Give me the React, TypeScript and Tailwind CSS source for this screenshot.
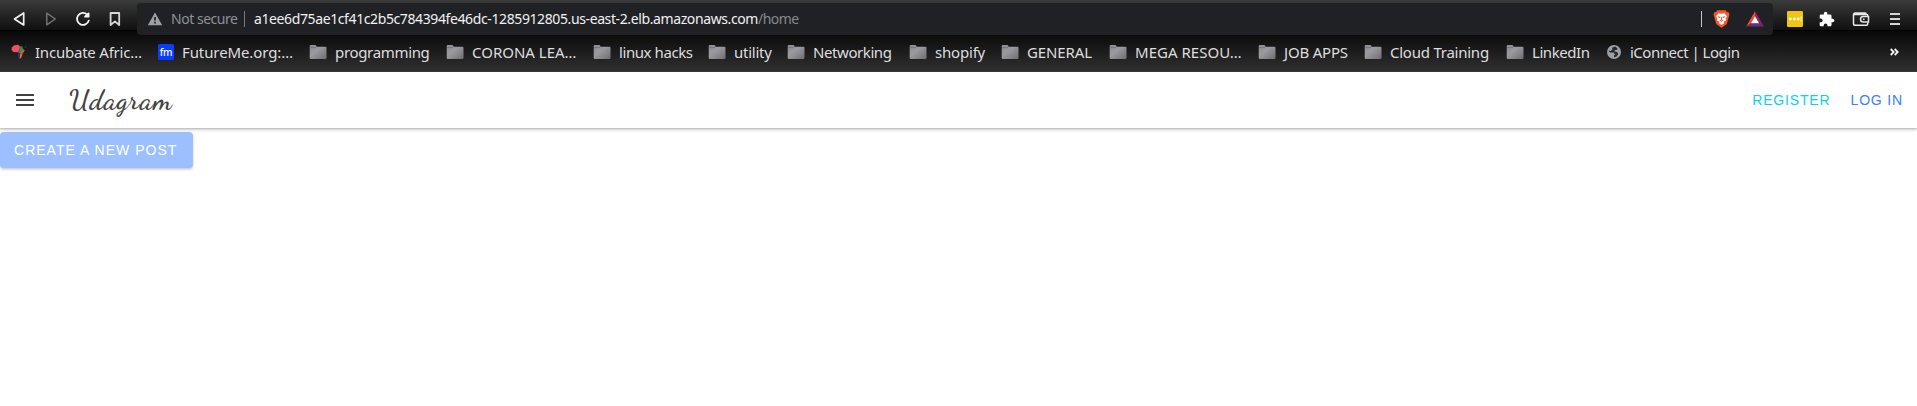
import type { ReactNode } from 'react';

function FolderIcon() {
  return (
    <svg width="18" height="16" viewBox="0 0 18 16">
      <defs>
        <linearGradient id="folder" x1="0" y1="0" x2="1" y2="1">
          <stop offset="0" stopColor="#8d8d90" />
          <stop offset="0.4" stopColor="#9a9a9f" />
          <stop offset="1" stopColor="#6f6f73" />
        </linearGradient>
      </defs>
      <path d="M.7 2.2Q.7 1 1.7 1H6.2Q7 1 7.2 1.8L7.5 2.8H16.4Q17.5 2.8 17.5 3.8V13.8Q17.5 15 16.4 15H1.8Q.7 15 .7 13.8Z" fill="url(#folder)" />
      <path d="M1.2 3.6H7" stroke="#68686c" strokeWidth=".7" />
    </svg>
  );
}

function AfricaIcon() {
  return (
    <svg width="16" height="16" viewBox="0 0 16 16">
      <path d="M1 3.2L3.2 1.2 7.3 .8 9 2.5 8.5 6.8 6.8 8.2 2.4 8 .4 5.7Z" fill="#f0525a" />
      <path d="M9 2.5L11.3 2.2 12.2 5.5 9.7 9.2 7 8.7 8.7 6.7Z" fill="#129a55" />
      <path d="M11.8 5L13.8 6.4 12.4 8.4 10.8 10.5 9.2 9.2Z" fill="#e8552d" />
      <path d="M7 9L9.2 9.5 8.7 14.7 7 13Z" fill="#2c2d86" />
      <path d="M9.2 9.5L11.5 10.6 10.3 13.5 8.6 15Z" fill="#f0692b" />
      <path d="M13.5 3.2L15.6 1.8 14.7 3.6Z" fill="#187044" />
    </svg>
  );
}

function FutureMeIcon() {
  return (
    <span className="flex size-4 items-center justify-center rounded-[1.5px] bg-[#0a3cff] pb-px font-['Noto_Sans',sans-serif] text-[10px] leading-none font-medium tracking-[-0.2px] text-white">
      fm
    </span>
  );
}

function GlobeIcon() {
  return (
    <svg width="16" height="16" viewBox="0 0 16 16">
      <circle cx="8" cy="8" r="7" fill="#9aa0a6" />
      <path d="M9.2 2.6L6.1 3.8 6.4 5.7 4.4 6.9 2.4 6.7 4 8.5 7.6 8.5 9.2 10.4 8 11.6V13.2L10.6 12.4 12.3 9.7 11 8 8.4 7.4 8.6 6.2 11 5.7 11.6 4.4Z" fill="#27282a" />
    </svg>
  );
}

type Bookmark = { label: string; icon?: ReactNode; width: string; tracking: string };

const bookmarks: Bookmark[] = [
  { label: 'Incubate Afric…', icon: <AfricaIcon />, width: 'w-[147px]', tracking: 'tracking-[-0.22px]' },
  { label: 'FutureMe.org:…', icon: <FutureMeIcon />, width: 'w-[153px]', tracking: 'tracking-[-0.1px]' },
  { label: 'programming', width: 'w-[137px]', tracking: 'tracking-[-0.33px]' },
  { label: 'CORONA LEA…', width: 'w-[147px]', tracking: 'tracking-[0px]' },
  { label: 'linux hacks', width: 'w-[115px]', tracking: 'tracking-[-0.42px]' },
  { label: 'utility', width: 'w-[79px]', tracking: 'tracking-[-0.25px]' },
  { label: 'Networking', width: 'w-[122px]', tracking: 'tracking-[-0.42px]' },
  { label: 'shopify', width: 'w-[92px]', tracking: 'tracking-[-0.2px]' },
  { label: 'GENERAL', width: 'w-[108px]', tracking: 'tracking-[-0.1px]' },
  { label: 'MEGA RESOU…', width: 'w-[149px]', tracking: 'tracking-[0.02px]' },
  { label: 'JOB APPS', width: 'w-[106px]', tracking: 'tracking-[-0.2px]' },
  { label: 'Cloud Training', width: 'w-[142px]', tracking: 'tracking-[-0.24px]' },
  { label: 'LinkedIn', width: 'w-[98px]', tracking: 'tracking-[-0.45px]' },
  { label: 'iConnect | Login', icon: <GlobeIcon />, width: 'w-[134px]', tracking: 'tracking-[-0.5px]' },
];

function NavigationBar() {
  return (
    <div className="flex h-[31px] items-start border-b border-[#000] bg-linear-to-b from-[#3b3b3b] to-[#101010]">
      <div className="flex w-[137px] shrink-0 pt-[9px] pl-[10px]">
        <svg className="mr-3 size-5" viewBox="0 0 20 20" fill="none" stroke="#f1f1f1" strokeWidth="1.7" strokeLinejoin="round">
          <path d="M13.7 4V16L4.5 10Z" />
        </svg>
        <svg className="mr-3 size-5" viewBox="0 0 20 20" fill="none" stroke="#767676" strokeWidth="1.4" strokeLinejoin="round">
          <path d="M4.8 4.2V15.8L13.3 10Z" />
        </svg>
        <svg className="mr-3 size-5" viewBox="0 0 20 20" fill="none" stroke="#f4f4f4" strokeWidth="1.8" strokeLinecap="round">
          <path d="M13.2 5.6A6 6 0 1 0 14.8 11.6" />
          <path d="M11 7.7L14.6 7.7 14.6 4.4Z" fill="#f4f4f4" strokeLinejoin="round" />
        </svg>
        <svg className="size-5" viewBox="0 0 20 20" fill="none" stroke="#d8d8d8" strokeWidth="1.8" strokeLinejoin="round">
          <path d="M4.6 4H13.2V16L8.9 12.4 4.6 16Z" />
        </svg>
      </div>

      <div className="relative z-10 mt-[3px] flex h-8 w-[1636px] shrink-0 items-center rounded bg-[#202124] pl-[10px] text-[14px] leading-8">
        <svg width="16" height="16" viewBox="0 0 16 16" className="shrink-0">
          <path d="M8 1.6L15.2 14.3H.8Z" fill="#9aa0a6" />
          <path d="M8 6V9.6M8 10.8V12.4" stroke="#202124" strokeWidth="1.7" />
        </svg>
        <span className="ml-2 w-[73px] shrink-0 tracking-[-0.47px] text-[#8d9299]">Not secure</span>
        <span className="h-4 w-px shrink-0 bg-[#777a7e]" />
        <span className="ml-[9px] grow whitespace-nowrap text-[#f0f1f2]">
          <span className="tracking-[-0.39px]">a1ee6d75ae1cf41c2b5c784394fe46dc-1285912805.us-east-2.elb.amazonaws.com</span>
          <span className="tracking-[-0.55px] text-[#85898e]">/home</span>
        </span>
        <span className="h-4 w-px shrink-0 bg-[#c4c5c7]" />
        <svg className="ml-[11px] shrink-0" width="17" height="18" viewBox="0 0 17 18">
          <path d="M4.6 .3H12.4L14 2 15.4 1.9 16.5 4.5 15.9 6.4 13.8 14 8.5 17.8 3.2 14 1.1 6.4 .5 4.5 1.6 1.9 3 2Z" fill="#fb542b" />
          <path d="M8.5 3.7L11.4 3.2 14 6.3 12.6 8.6 13 10.3 10.7 11.8 11 13.2 8.5 15.1 6 13.2 6.3 11.8 4 10.3 4.4 8.6 3 6.3 5.6 3.2Z" fill="#fff" />
          <path d="M5 6.8L7.3 7.4M12 6.8L9.7 7.4M8.5 7.3V10M6.8 10.2L8.5 11.2 10.2 10.2" stroke="#fb542b" strokeWidth="1.1" fill="none" />
        </svg>
        <svg className="mr-[9px] ml-4 shrink-0" width="18" height="16" viewBox="0 0 18 16">
          <path d="M9 .2L.2 15.5 5 12.3 9 5.2Z" fill="#ff4724" />
          <path d="M9 .2L17.8 15.5 13 12.3 9 5.2Z" fill="#9e1f63" />
          <path d="M.2 15.5H17.8L13 12.3H5Z" fill="#662d91" />
          <path d="M9 5.2L13 12.3H5Z" fill="#fff" />
        </svg>
      </div>

      <div className="flex grow items-center pt-[11px] pl-[14px]">
        <svg width="16" height="16" viewBox="0 0 16 16">
          <rect width="16" height="16" rx="1.3" fill="#f1c40f" />
          <circle cx="3.4" cy="8" r="1.4" fill="#fff" />
          <circle cx="7.3" cy="8" r="1.4" fill="#fff" />
          <circle cx="11.2" cy="8" r="1.4" fill="#fff" />
          <path d="M14.1 5.3V10.7" stroke="#fff" strokeWidth=".8" />
        </svg>
        <svg className="ml-4" width="16" height="16" viewBox="1 0 23 23" fill="#fff">
          <path d="M20.5 11H19V7c0-1.1-.9-2-2-2h-4V3.5C13 2.12 11.88 1 10.5 1S8 2.12 8 3.5V5H4c-1.1 0-1.99.9-1.99 2v3.8H3.5c1.49 0 2.7 1.21 2.7 2.7s-1.21 2.7-2.7 2.7H2V20c0 1.1.9 2 2 2h3.8v-1.5c0-1.49 1.21-2.7 2.7-2.7 1.49 0 2.7 1.21 2.7 2.7V22H17c1.1 0 2-.9 2-2v-4h1.5c1.38 0 2.5-1.12 2.5-2.5S21.88 11 20.5 11z" />
        </svg>
        <svg className="ml-[17px]" width="18" height="16" viewBox="0 0 18 16" fill="none" stroke="#e8e8e8" strokeWidth="1.5">
          <path d="M15.7 5V4.1Q15.7 3.6 14.8 3.6H3Q1.5 3.6 1.5 2.9M15.7 11.5V13Q15.7 14.2 14.5 14.2H3.3Q1.5 14.2 1.5 12.4V3.8Q1.5 2.1 3.3 2.1H13Q14.3 2.1 14.3 3.5" />
          <path d="M16.5 5.5H11.3A2.8 2.8 0 0 0 11.3 11.1H16.5Z" fill="#1b1b1b" />
          <path d="M10.9 8.3H12.6" />
        </svg>
        <svg className="ml-[19px]" width="12" height="16" viewBox="0 0 12 16" stroke="#d5d5d5" strokeWidth="2">
          <path d="M1 3H11M1 8H11M1 13H11" />
        </svg>
      </div>
    </div>
  );
}

function BookmarksBar() {
  return (
    <div className="flex h-[41px] items-center border-b border-[#3a3a3a] bg-linear-to-b from-[#090909] to-[#303030] pt-[2px] pr-[18px] pl-[11px] text-[15px] leading-5">
      {bookmarks.map((b) => (
        <div key={b.label} className={`flex shrink-0 items-center whitespace-nowrap ${b.width}`}>
          <span className="flex w-6 shrink-0 items-center">
            {b.icon ?? <span className="-ml-[2px]"><FolderIcon /></span>}
          </span>
          <span className={`text-[#dededf] ${b.tracking}`}>{b.label}</span>
        </div>
      ))}
      <svg className="ml-auto" width="9" height="8" viewBox="0 0 9 8" fill="none" stroke="#f2f2f2" strokeWidth="1.8">
        <path d="M.7 1L3.7 4 .7 7M4.7 1L7.7 4 4.7 7" />
      </svg>
    </div>
  );
}

export default function App() {
  return (
    <div className="flex h-[406px] w-full flex-col overflow-hidden bg-white font-['Noto_Sans',sans-serif]">
      <header className="h-[72px] shrink-0">
        <NavigationBar />
        <BookmarksBar />
      </header>

      <nav className="flex h-14 shrink-0 items-center bg-white pr-[14px] pl-4 font-['Liberation_Sans',Arial,sans-serif] text-[14px] tracking-[0.84px] shadow-[0_1px_2px_rgba(0,0,0,0.22),0_2px_4px_rgba(0,0,0,0.12)]">
        <svg width="18" height="12" viewBox="0 0 18 12" fill="#424242">
          <path d="M0 0H18V2H0ZM0 5H18V7H0ZM0 10H18V12H0Z" />
        </svg>
        <span className="ml-[35px] font-['Dancing_Script','Liberation_Serif',cursive] text-[28px] leading-8 font-semibold tracking-[0.84px] text-[#424242]">
          Udagram
        </span>
        <a className="ml-auto text-[#0cd1e8]">REGISTER</a>
        <a className="ml-5 text-[#3880ff]">LOG IN</a>
      </nav>

      <main className="pt-1 font-['Liberation_Sans',Arial,sans-serif]">
        <button className="flex h-9 w-[193px] items-center rounded bg-[#9bbfff] pl-[14px] text-[14px] tracking-[1.02px] whitespace-nowrap text-white shadow-[0_2px_2px_rgba(0,0,0,0.1),0_1px_3px_rgba(0,0,0,0.12)]">
          CREATE A NEW POST
        </button>
      </main>
    </div>
  );
}
